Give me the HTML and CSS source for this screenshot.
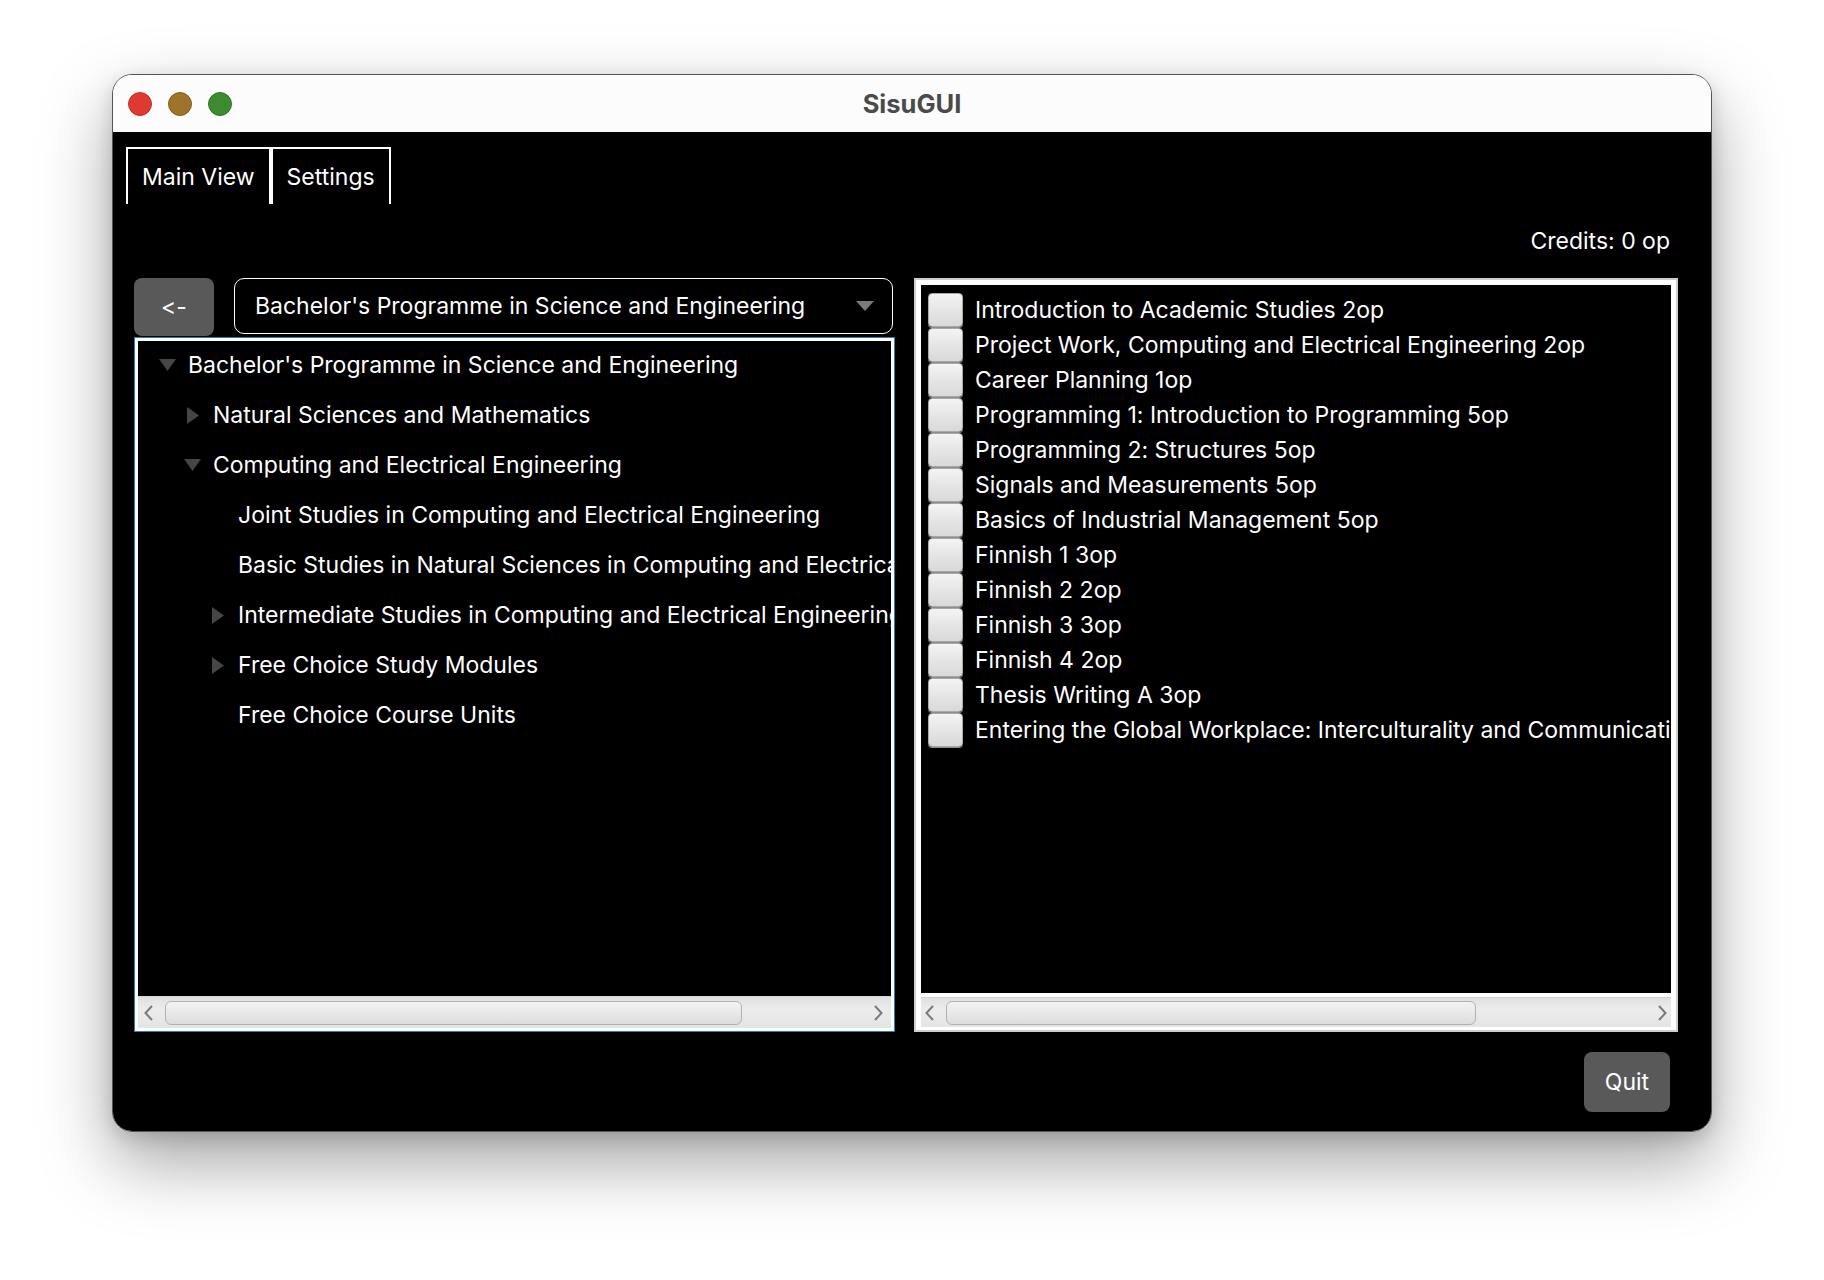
FILE: index.html
```html
<!DOCTYPE html>
<html>
<head>
<meta charset="utf-8">
<title>SisuGUI</title>
<link rel="stylesheet" href="styles.css">
</head>
<body>
<div class="window">
  <div class="titlebar">
    <div class="lights">
      <span class="light red"></span>
      <span class="light yellow"></span>
      <span class="light green"></span>
    </div>
    <div class="title">SisuGUI</div>
    <div></div>
  </div>
  <div class="content">
    <div class="tabs">
      <div class="tab">Main View</div>
      <div class="tab">Settings</div>
    </div>
    <div class="credits">Credits: 0 op</div>
    <div class="main">
      <div class="left">
        <div class="topbar">
          <div class="back">&lt;-</div>
          <div class="combo">
            <span class="combo-text">Bachelor's Programme in Science and Engineering</span>
            <svg class="combo-arrow" width="18" height="10" viewBox="0 0 18 10"><polygon points="0,0 18,0 9,10" fill="#7a7a7a"/></svg>
          </div>
        </div>
        <div class="tree">
          <div class="tree-inner">
            <div class="tree-rows">
              <div class="trow l0"><span class="disc"><svg width="17" height="12" viewBox="0 0 17 12"><polygon points="0,0 17,0 8.5,12" fill="#464646"/></svg></span><span>Bachelor's Programme in Science and Engineering</span></div>
              <div class="trow l1"><span class="disc"><svg width="12" height="17" viewBox="0 0 12 17"><polygon points="0,0 12,8.5 0,17" fill="#464646"/></svg></span><span>Natural Sciences and Mathematics</span></div>
              <div class="trow l1"><span class="disc"><svg width="17" height="12" viewBox="0 0 17 12"><polygon points="0,0 17,0 8.5,12" fill="#464646"/></svg></span><span>Computing and Electrical Engineering</span></div>
              <div class="trow l2"><span class="disc"></span><span>Joint Studies in Computing and Electrical Engineering</span></div>
              <div class="trow l2"><span class="disc"></span><span>Basic Studies in Natural Sciences in Computing and Electrical Engineering</span></div>
              <div class="trow l2"><span class="disc"><svg width="12" height="17" viewBox="0 0 12 17"><polygon points="0,0 12,8.5 0,17" fill="#464646"/></svg></span><span>Intermediate Studies in Computing and Electrical Engineering</span></div>
              <div class="trow l2"><span class="disc"><svg width="12" height="17" viewBox="0 0 12 17"><polygon points="0,0 12,8.5 0,17" fill="#464646"/></svg></span><span>Free Choice Study Modules</span></div>
              <div class="trow l2"><span class="disc"></span><span>Free Choice Course Units</span></div>
            </div>
            <div class="hscroll tree-scroll">
              <svg class="arr" width="9" height="16" viewBox="0 0 9 16"><polyline points="8,1 1.5,8 8,15" fill="none" stroke="#7a7a7a" stroke-width="2"/></svg>
              <div class="track"><div class="thumb tree-thumb"></div></div>
              <svg class="arr" width="9" height="16" viewBox="0 0 9 16"><polyline points="1,1 7.5,8 1,15" fill="none" stroke="#7a7a7a" stroke-width="2"/></svg>
            </div>
          </div>
        </div>
      </div>
      <div class="list">
        <div class="list-inner">
          <div class="list-rows">
            <div class="lrow"><span class="cb"></span><span>Introduction to Academic Studies 2op</span></div>
            <div class="lrow"><span class="cb"></span><span>Project Work, Computing and Electrical Engineering 2op</span></div>
            <div class="lrow"><span class="cb"></span><span>Career Planning 1op</span></div>
            <div class="lrow"><span class="cb"></span><span>Programming 1: Introduction to Programming 5op</span></div>
            <div class="lrow"><span class="cb"></span><span>Programming 2: Structures 5op</span></div>
            <div class="lrow"><span class="cb"></span><span>Signals and Measurements 5op</span></div>
            <div class="lrow"><span class="cb"></span><span>Basics of Industrial Management 5op</span></div>
            <div class="lrow"><span class="cb"></span><span>Finnish 1 3op</span></div>
            <div class="lrow"><span class="cb"></span><span>Finnish 2 2op</span></div>
            <div class="lrow"><span class="cb"></span><span>Finnish 3 3op</span></div>
            <div class="lrow"><span class="cb"></span><span>Finnish 4 2op</span></div>
            <div class="lrow"><span class="cb"></span><span>Thesis Writing A 3op</span></div>
            <div class="lrow"><span class="cb"></span><span>Entering the Global Workplace: Interculturality and Communication 5op</span></div>
          </div>
          <div class="hscroll list-scroll">
            <svg class="arr" width="9" height="16" viewBox="0 0 9 16"><polyline points="8,1 1.5,8 8,15" fill="none" stroke="#7a7a7a" stroke-width="2"/></svg>
            <div class="track"><div class="thumb list-thumb"></div></div>
            <svg class="arr" width="9" height="16" viewBox="0 0 9 16"><polyline points="1,1 7.5,8 1,15" fill="none" stroke="#7a7a7a" stroke-width="2"/></svg>
          </div>
        </div>
      </div>
    </div>
    <div class="footer">
      <div class="quit">Quit</div>
    </div>
  </div>
</div>
</body>
</html>
```
FILE: styles.css
```css
* { box-sizing: border-box; }
html, body { margin: 0; padding: 0; }
body {
  background: #ffffff;
  width: 1824px;
  height: 1280px;
  overflow: hidden;
  font-family: Inter, "Noto Sans", "Liberation Sans", sans-serif;
  font-size: 23px;
  font-feature-settings: "calt" 0, "liga" 0;
  font-variant-ligatures: none;
  color: #fff;
}
.window {
  margin: 74px 0 0 112px;
  width: 1600px;
  height: 1058px;
  border: 1px solid #555;
  border-radius: 20px;
  overflow: hidden;
  display: flex;
  flex-direction: column;
  box-shadow: 0 30px 70px rgba(0,0,0,0.36), 0 6px 18px rgba(0,0,0,0.14);
}
.titlebar {
  height: 57px;
  flex: none;
  background: #fcfcfc;
  display: grid;
  grid-template-columns: 1fr auto 1fr;
  align-items: center;
}
.lights { display: flex; gap: 16px; padding-left: 15px; }
.light { width: 24px; height: 24px; border-radius: 50%; display: block; }
.red { background: #df3a2f; border: 1px solid #c4322a; }
.yellow { background: #9d7429; border: 1px solid #85611f; }
.green { background: #3e8a2e; border: 1px solid #347525; }
.title { font-weight: 700; font-size: 25.5px; color: #4a4a4a; }
.content {
  flex: 1;
  background: #000;
  padding: 15px 33px 0 21px;
  display: flex;
  flex-direction: column;
}
.tabs { display: flex; margin-left: -8px; height: 57px; }
.tab {
  height: 57px;
  border: 2px solid #fff;
  border-bottom: none;
  padding: 0 14px;
  display: flex;
  align-items: center;
}
.credits {
  margin-top: 17px;
  height: 40px;
  line-height: 40px;
  text-align: right;
  padding-right: 8px;
}
.main { display: flex; gap: 19px; height: 754px; margin-top: 17px; }
.left { width: 761px; display: flex; flex-direction: column; }
.topbar { display: flex; gap: 20px; height: 59px; flex: none; align-items: flex-start; }
.back {
  width: 80px; height: 58px;
  background: #595959;
  border-radius: 8px;
  display: flex; align-items: center; justify-content: center;
}
.combo {
  width: 659px; height: 56px;
  border: 1.5px solid #fff;
  border-radius: 10px;
  display: flex; align-items: center;
  padding: 0 18px 0 20px;
  justify-content: space-between;
}
.tree { flex: 1; border: 1px solid #2b7fb3; min-height: 0; }
.tree-inner {
  height: 100%;
  border: 3px solid #fff;
  display: flex; flex-direction: column;
  background: #000;
}
.tree-rows { flex: 1; overflow: hidden; margin-top: -1px; }
.trow { height: 50px; display: flex; align-items: center; white-space: nowrap; }
.trow.l0 { padding-left: 21px; }
.trow.l1 { padding-left: 46px; }
.trow.l2 { padding-left: 71px; }
.disc { width: 17px; flex: none; display: flex; justify-content: center; align-items: center; margin-right: 12px; }
.hscroll {
  flex: none;
  display: flex;
  align-items: center;
  background: linear-gradient(#e0e0e0, #ececec 40%, #e4e4e4);
  border-top: 1px solid #d4d4d4;
}
.tree-scroll { height: 32px; padding: 0 8px 0 6px; }
.list-scroll { height: 30px; padding: 0 4px 0 4px; }
.hscroll .arr { flex: none; }
.track { flex: 1; height: 100%; display: flex; align-items: center; }
.thumb {
  height: 24px;
  border: 1.5px solid #b2b2b2;
  border-radius: 6px;
  background: linear-gradient(#f3f3f3, #e6e6e6 60%, #dcdcdc);
}
.tree-thumb { width: 577px; margin-left: 12px; }
.list-thumb { width: 530px; margin-left: 12px; }
.list { flex: 1; border: 2px solid #cdcdcd; min-width: 0; }
.list-inner {
  height: 100%;
  border: 5px solid #fff;
  border-bottom-width: 3px;
  display: flex; flex-direction: column;
  background: #fff;
}
.list-rows {
  flex: 1;
  background: #000;
  border-bottom: 4px solid #fff;
  overflow: hidden;
  padding: 7px 0 0 7px;
}
.lrow { height: 35px; display: flex; align-items: center; white-space: nowrap; }
.cb {
  width: 35px; height: 34px; flex: none;
  border: 1px solid #a9a9a9;
  border-radius: 4px;
  background: linear-gradient(#f4f4f4, #e4e4e4 55%, #d9d9d9);
  box-shadow: 0 1px 0 #8c8c8c;
  margin-right: 12px;
}
.footer { display: flex; justify-content: flex-end; margin-top: 20px; padding-right: 8px; }
.quit {
  width: 86px; height: 60px;
  background: #595959;
  border-radius: 8px;
  display: flex; align-items: center; justify-content: center;
}
```
